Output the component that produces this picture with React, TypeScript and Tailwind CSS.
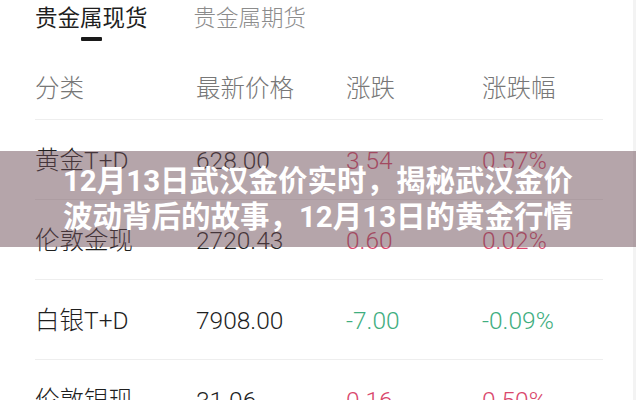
import React from 'react';

interface Row {
  name: string;
  price: string;
  change: string;
  percent: string;
  up: boolean;
}

const rows: Row[] = [
  { name: '黄金T+D', price: '628.00', change: '3.54', percent: '0.57%', up: true },
  { name: '伦敦金现', price: '2720.43', change: '0.60', percent: '0.02%', up: true },
  { name: '白银T+D', price: '7908.00', change: '-7.00', percent: '-0.09%', up: false },
  { name: '伦敦银现', price: '31.06', change: '0.16', percent: '0.50%', up: true },
];

const font = { fontFamily: 'Roboto, "Noto Sans CJK SC", sans-serif' };

export default function App() {
  return (
    <div
      className="relative w-[636px] h-[400px] overflow-hidden bg-white flex"
      style={font}
    >
      <div className="flex-1">
        {/* Tabs */}
        <div className="flex items-center h-[36px] pl-[35px] gap-[46px] text-[22.5px] leading-none">
          <span className="text-[#1f1f1f]">贵金属现货</span>
          <span className="text-[#8c8c8c] font-light">贵金属期货</span>
        </div>
        <div className="pl-[81px] mt-[1px]">
          <div className="w-[21px] h-[4px] bg-[#1a1a1a] rounded-[1px]" />
        </div>

        {/* Header */}
        <div className="mt-[19px] h-[59px] grid grid-cols-[161px_150px_136px_1fr] items-center pl-[35px] text-[24.5px] leading-none font-light text-[#777777]">
          <span>分类</span>
          <span>最新价格</span>
          <span>涨跌</span>
          <span>涨跌幅</span>
        </div>
        <div className="ml-[35px] w-[568px] h-px bg-[#eeeeee]" />

        {/* Rows */}
        {rows.map((r) => (
          <React.Fragment key={r.name}>
            <div className="h-[79px] grid grid-cols-[161px_150px_136px_1fr] items-center pl-[35px] pt-[3px] text-[24.5px] leading-none font-light">
              <span className="text-[#1f1f1f]">{r.name}</span>
              <span className="text-[#1f1f1f]">{r.price}</span>
              <span className={r.up ? 'text-[#d9486c]' : 'text-[#3fae7f]'}>{r.change}</span>
              <span className={r.up ? 'text-[#d9486c]' : 'text-[#3fae7f]'}>{r.percent}</span>
            </div>
            <div className="ml-[35px] w-[568px] h-px bg-[#eeeeee]" />
          </React.Fragment>
        ))}
      </div>
      <div className="w-[3px] bg-[#f3f3f3]" />

      {/* Title overlay */}
      <div className="absolute left-0 right-0 top-[151px] h-[96px] bg-[rgba(107,75,85,0.5)] flex flex-col items-center justify-center text-white font-bold text-[29.5px] leading-[36px]">
        <div>12月13日武汉金价实时，揭秘武汉金价</div>
        <div>波动背后的故事，12月13日的黄金行情</div>
      </div>
    </div>
  );
}
